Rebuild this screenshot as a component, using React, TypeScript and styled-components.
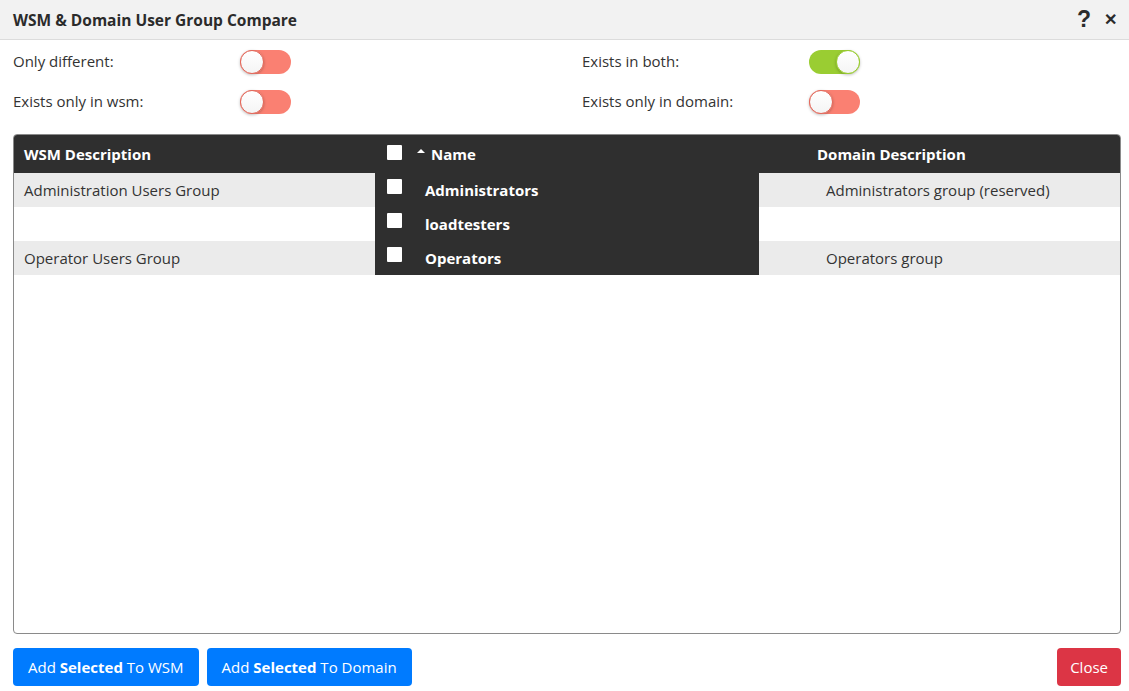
import styled, { createGlobalStyle } from "styled-components";

const GlobalStyle = createGlobalStyle`
  html, body {
    margin: 0;
    padding: 0;
    background: #fff;
    font-family: "Open Sans", "Noto Sans", sans-serif;
    color: #333;
  }
  * { box-sizing: border-box; }
`;

const Dialog = styled.div`
  width: 1129px;
  height: 691px;
  display: flex;
  flex-direction: column;
  background: #fff;
`;

const TitleBar = styled.div`
  height: 40px;
  display: flex;
  align-items: center;
  justify-content: space-between;
  padding: 0 12px 0 13px;
  background: #f2f2f2;
  border-bottom: 1px solid #dcdcdc;
`;

const Title = styled.h1`
  margin: 0;
  font-size: 15.5px;
  font-weight: 700;
  color: #2b2b2b;
`;

const TitleIcons = styled.div`
  display: flex;
  align-items: center;
  gap: 13px;
`;

const IconButton = styled.span<{ $size: number }>`
  font-family: "Liberation Sans", sans-serif;
  font-weight: 700;
  font-size: ${(p) => p.$size}px;
  color: #2b2b2b;
  line-height: 1;
  cursor: pointer;
`;

const Filters = styled.div`
  display: grid;
  grid-template-columns: 227px 342px 227px 1fr;
  grid-auto-rows: 40px;
  padding: 2px 13px 0 13px;
  align-items: center;
`;

const FilterLabel = styled.span`
  font-size: 15px;
  color: #333;
  margin-top: -3px;
`;

const Toggle = styled.span<{ $on: boolean }>`
  position: relative;
  display: inline-block;
  width: 51px;
  height: 24px;
  border-radius: 12px;
  margin-top: 5px;
  background: ${(p) => (p.$on ? "#9acd32" : "#fa8072")};

  &::after {
    content: "";
    position: absolute;
    top: 0;
    left: ${(p) => (p.$on ? "27px" : "0")};
    width: 24px;
    height: 24px;
    border-radius: 50%;
    background: linear-gradient(#fff, #f4f4f4);
    border: 1px solid ${(p) => (p.$on ? "#9acd32" : "#e0695c")};
    box-shadow: 0 1px 3px rgba(0, 0, 0, 0.25);
    box-sizing: border-box;
  }
`;

const TableBox = styled.div`
  flex: 1;
  margin: 12px 8px 0 13px;
  border: 1px solid #8a8a8a;
  border-radius: 4px;
  overflow: hidden;
`;

const Grid = styled.div`
  display: grid;
  grid-template-columns: 361px 384px 1fr;
`;

const HeadCell = styled.div<{ $pad?: number }>`
  height: 38px;
  background: #2f2f2f;
  color: #fff;
  font-weight: 700;
  font-size: 15px;
  display: flex;
  align-items: center;
  padding-left: ${(p) => p.$pad ?? 10}px;
`;

const Cell = styled.div<{ $alt: boolean; $pad?: number }>`
  height: 34px;
  display: flex;
  align-items: center;
  padding-left: ${(p) => p.$pad ?? 10}px;
  font-size: 15px;
  color: #333;
  background: ${(p) => (p.$alt ? "#ebebeb" : "#fff")};
`;

const NameCell = styled.div`
  height: 34px;
  display: flex;
  align-items: center;
  padding-left: 12px;
  background: #2f2f2f;
  color: #fff;
  font-weight: 700;
  font-size: 15px;
`;

const Check = styled.span`
  display: inline-block;
  width: 15px;
  height: 15px;
  background: #fff;
  border-radius: 1px;
  margin-top: -8px;
  margin-right: 23px;
`;

const HeadCheck = styled(Check)`
  margin-top: -4px;
  margin-right: 15px;
`;

const Caret = styled.span`
  display: inline-block;
  width: 0;
  height: 0;
  border-left: 4px solid transparent;
  border-right: 4px solid transparent;
  border-bottom: 4px solid #fff;
  margin: -6px 6px 0 0;
`;

const Footer = styled.div`
  display: flex;
  align-items: center;
  gap: 8px;
  padding: 14px 8px 5px 13px;
`;

const Button = styled.button<{ $variant: "primary" | "danger" }>`
  height: 38px;
  padding: 0 ${(p) => (p.$variant === "danger" ? 13 : 15)}px;
  border: none;
  border-radius: 4px;
  color: #fff;
  font-family: "Open Sans", "Noto Sans", sans-serif;
  font-size: 15px;
  background: ${(p) => (p.$variant === "danger" ? "#dc3545" : "#007bff")};
  cursor: pointer;

  b { font-weight: 700; }
`;

const Spacer = styled.div`
  flex: 1;
`;

const rows = [
  { wsm: "Administration Users Group", name: "Administrators", domain: "Administrators group (reserved)" },
  { wsm: "", name: "loadtesters", domain: "" },
  { wsm: "Operator Users Group", name: "Operators", domain: "Operators group" },
];

export default function App() {
  return (
    <Dialog>
      <GlobalStyle />
      <TitleBar>
        <Title>WSM &amp; Domain User Group Compare</Title>
        <TitleIcons>
          <IconButton $size={23}>?</IconButton>
          <IconButton $size={16}>✕</IconButton>
        </TitleIcons>
      </TitleBar>

      <Filters>
        <FilterLabel>Only different:</FilterLabel>
        <span><Toggle $on={false} /></span>
        <FilterLabel>Exists in both:</FilterLabel>
        <span><Toggle $on={true} /></span>
        <FilterLabel>Exists only in wsm:</FilterLabel>
        <span><Toggle $on={false} /></span>
        <FilterLabel>Exists only in domain:</FilterLabel>
        <span><Toggle $on={false} /></span>
      </Filters>

      <TableBox>
        <Grid>
          <HeadCell>WSM Description</HeadCell>
          <HeadCell $pad={12}>
            <HeadCheck />
            <Caret />
            Name
          </HeadCell>
          <HeadCell $pad={58}>Domain Description</HeadCell>
          {rows.map((r, i) => (
            <>
              <Cell key={`w${i}`} $alt={i % 2 === 0}>{r.wsm}</Cell>
              <NameCell key={`n${i}`}>
                <Check />
                {r.name}
              </NameCell>
              <Cell key={`d${i}`} $alt={i % 2 === 0} $pad={67}>{r.domain}</Cell>
            </>
          ))}
        </Grid>
      </TableBox>

      <Footer>
        <Button $variant="primary">Add <b>Selected</b> To WSM</Button>
        <Button $variant="primary">Add <b>Selected</b> To Domain</Button>
        <Spacer />
        <Button $variant="danger">Close</Button>
      </Footer>
    </Dialog>
  );
}
